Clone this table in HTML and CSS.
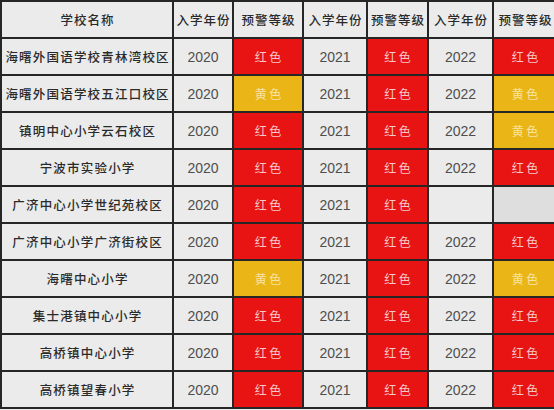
FILE: index.html
```html
<!DOCTYPE html>
<html lang="zh">
<head>
<meta charset="utf-8">
<link rel="stylesheet" href="styles.css">
</head>
<body>
<table class="grid">
  <colgroup>
    <col class="c-name"><col class="c-y1"><col class="c-l1"><col class="c-y2"><col class="c-l2"><col class="c-y3"><col class="c-l3">
  </colgroup>
  <thead>
    <tr><th>学校名称</th><th>入学年份</th><th>预警等级</th><th>入学年份</th><th>预警等级</th><th>入学年份</th><th>预警等级</th></tr>
  </thead>
  <tbody>
    <tr><td class="name">海曙外国语学校青林湾校区</td><td class="yr">2020</td><td class="red">红色</td><td class="yr">2021</td><td class="red">红色</td><td class="yr">2022</td><td class="red">红色</td></tr>
    <tr><td class="name">海曙外国语学校五江口校区</td><td class="yr">2020</td><td class="yel">黄色</td><td class="yr">2021</td><td class="red">红色</td><td class="yr">2022</td><td class="yel">黄色</td></tr>
    <tr><td class="name">镇明中心小学云石校区</td><td class="yr">2020</td><td class="red">红色</td><td class="yr">2021</td><td class="red">红色</td><td class="yr">2022</td><td class="yel">黄色</td></tr>
    <tr><td class="name">宁波市实验小学</td><td class="yr">2020</td><td class="red">红色</td><td class="yr">2021</td><td class="red">红色</td><td class="yr">2022</td><td class="red">红色</td></tr>
    <tr><td class="name">广济中心小学世纪苑校区</td><td class="yr">2020</td><td class="red">红色</td><td class="yr">2021</td><td class="red">红色</td><td class="yr"></td><td class="none"></td></tr>
    <tr><td class="name">广济中心小学广济街校区</td><td class="yr">2020</td><td class="red">红色</td><td class="yr">2021</td><td class="red">红色</td><td class="yr">2022</td><td class="red">红色</td></tr>
    <tr><td class="name">海曙中心小学</td><td class="yr">2020</td><td class="yel">黄色</td><td class="yr">2021</td><td class="red">红色</td><td class="yr">2022</td><td class="yel">黄色</td></tr>
    <tr><td class="name">集士港镇中心小学</td><td class="yr">2020</td><td class="red">红色</td><td class="yr">2021</td><td class="red">红色</td><td class="yr">2022</td><td class="red">红色</td></tr>
    <tr><td class="name">高桥镇中心小学</td><td class="yr">2020</td><td class="red">红色</td><td class="yr">2021</td><td class="red">红色</td><td class="yr">2022</td><td class="red">红色</td></tr>
    <tr><td class="name">高桥镇望春小学</td><td class="yr">2020</td><td class="red">红色</td><td class="yr">2021</td><td class="red">红色</td><td class="yr">2022</td><td class="red">红色</td></tr>
  </tbody>
</table>
</body>
</html>
```
FILE: styles.css
```css
html, body {
  margin: 0;
  padding: 0;
  background: #ebebeb;
  overflow: hidden;
}
.grid {
  border-collapse: collapse;
  table-layout: fixed;
  width: 556px;
  margin-top: 0;
}
.c-name { width: 172px; }
.c-y1 { width: 60px; }
.c-l1 { width: 70px; }
.c-y2 { width: 64px; }
.c-l2 { width: 61px; }
.c-y3 { width: 65px; }
.c-l3 { width: 64px; }
.grid tr { height: 37px; }
.grid th, .grid td {
  border: 2px solid #262626;
  padding: 0;
  text-align: center;
  vertical-align: middle;
  background: #ebebeb;
  white-space: nowrap;
  overflow: hidden;
}
.grid th {
  font-family: "Noto Sans CJK SC", sans-serif;
  font-weight: 500;
  font-size: 12.5px;
  letter-spacing: 1px;
  text-indent: 1px;
  color: #2a2a2a;
}
.grid td.name {
  font-family: "Noto Sans CJK SC", sans-serif;
  font-weight: 500;
  font-size: 12.5px;
  letter-spacing: 1.2px;
  text-indent: 1.2px;
  color: #2a2a2a;
}
.grid td.yr {
  font-family: "Liberation Sans Narrow", "Liberation Sans", sans-serif;
  font-size: 14px;
  color: #4e4e4e;
}
.grid td.red, .grid td.yel {
  font-family: "Noto Sans CJK SC", sans-serif;
  font-size: 12px;
  letter-spacing: 2.5px;
  text-indent: 2.5px;
}
.grid td.red {
  background: #e81414;
  color: #f6c8c8;
}
.grid td.yel {
  background: #e9b517;
  color: #f7e3a3;
}
.grid td.none {
  background: #dedede;
}
```
